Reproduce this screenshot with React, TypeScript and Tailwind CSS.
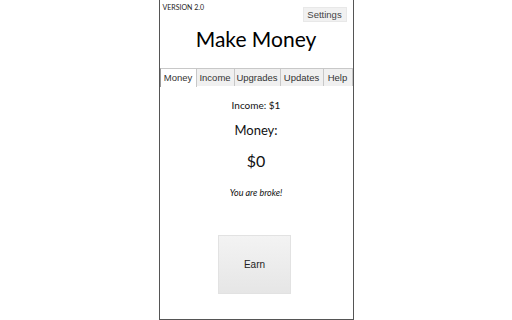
import React, { useState } from 'react';

const tabs = [
  { name: 'Money', w: 'w-[37px]' },
  { name: 'Income', w: 'w-[38px]' },
  { name: 'Upgrades', w: 'w-[46px]' },
  { name: 'Updates', w: 'w-[43px]' },
  { name: 'Help', w: 'w-[29px]' },
];

export default function App() {
  const [active, setActive] = useState('Money');
  const [money, setMoney] = useState(0);
  const income = 1;

  return (
    <div className="w-[512px] h-[320px] bg-white flex justify-center">
      <div className="w-[195px] h-[320px] border-x border-b border-[#555] flex flex-col">
        {/* header */}
        <div className="h-[68px] flex flex-col">
          <div className="flex justify-between items-start pl-[3px] pr-[6px] pt-[3px]">
            <span className="text-[7px] leading-[9px] text-[#222] font-['Lato',sans-serif]">VERSION 2.0</span>
            <button className="mt-[4px] h-[15px] w-[44px] bg-[#f1f1f1] border border-[#e8e8e8] text-[9.5px] leading-none text-[#444] font-['Liberation_Sans',Arial,sans-serif]">
              Settings
            </button>
          </div>
          <h1 className="text-center text-[21px] leading-none mt-[6px] text-black font-['Lato',sans-serif]">Make Money</h1>
        </div>

        {/* tabs */}
        <div className="flex h-[18px] border-b border-[#bbb] font-['Liberation_Sans',Arial,sans-serif]">
          {tabs.map(t => (
            <button
              key={t.name}
              onClick={() => setActive(t.name)}
              className={`${t.w} shrink-0 h-[18px] px-0 text-[9.5px] leading-none text-[#333] border-t border-r border-[#c8c8c8] ${
                active === t.name ? 'bg-white h-[19px] border-l border-l-[#999]' : 'bg-[#f0f0f0]'
              }`}
            >
              {t.name}
            </button>
          ))}
        </div>

        {/* content */}
        <div className="flex flex-col items-center font-['Lato',sans-serif] text-[#111]">
          <div className="mt-[14px] text-[10px] leading-none">Income: ${income}</div>
          <div className="mt-[14px] text-[13px] leading-none">Money:</div>
          <div className="mt-[16px] text-[16px] leading-none">${money}</div>
          <div className="mt-[19px] text-[9px] leading-none italic">
            {money === 0 ? 'You are broke!' : 'Keep earning!'}
          </div>
          <button
            onClick={() => setMoney(m => m + income)}
            className="mt-[38px] mr-[3px] w-[73px] h-[59px] bg-gradient-to-b from-[#f3f3f3] to-[#e6e6e6] border border-[#e2e2e2] text-[10px] text-[#222] font-['Liberation_Sans',Arial,sans-serif]"
          >
            Earn
          </button>
        </div>
      </div>
    </div>
  );
}
